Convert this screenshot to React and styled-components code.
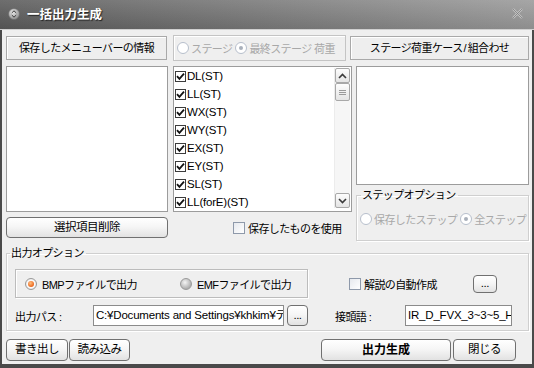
import React from 'react';
import styled, { createGlobalStyle } from 'styled-components';

const GlobalStyle = createGlobalStyle`
  html, body { margin: 0; padding: 0; background: #fff; }
  body {
    font-family: "Liberation Sans", "Noto Sans CJK JP", sans-serif;
    font-size: 11px;
    letter-spacing: -0.6px;
    color: #000;
  }
  * { box-sizing: border-box; }
`;

const Window = styled.div`
  width: 534px;
  height: 368px;
  display: flex;
  flex-direction: column;
  background: #efefef;
`;

const TitleBar = styled.div`
  height: 30px;
  flex: none;
  display: flex;
  align-items: center;
  padding: 0 10px 2px 8px;
  background:
    linear-gradient(rgba(255, 255, 255, 0.12), rgba(0, 0, 0, 0.08)),
    linear-gradient(to right, #5a5a5a, #7a7a7a 50%, #9a9a9a);
  border-bottom: 1px solid #d0d0d0;
`;

const Title = styled.span`
  margin-left: 7px;
  color: #fff;
  font-family: "Noto Sans CJK JP", sans-serif;
  font-weight: bold;
  font-size: 12.5px;
  letter-spacing: 0;
  text-shadow: 1px 1px 1px #222;
`;

const CloseBox = styled.span`
  margin-left: auto;
  display: flex;
`;

const Body = styled.div`
  flex: 1;
  display: flex;
  flex-direction: column;
  padding: 6px 3px 0 4px;
  border: solid #4a4a4a;
  border-width: 0 2px 4px 2px;
`;

const TopArea = styled.div`
  display: flex;
  align-items: flex-start;
`;

const Column = styled.div`
  display: flex;
  flex-direction: column;
  width: ${p => p.$w}px;
  margin-left: ${p => p.$ml || 0}px;
`;

const HeaderBox = styled.div`
  height: 24px;
  line-height: 22px;
  text-align: center;
  border: 1px solid #a9a9a9;
  background: #eeeeee;
  box-shadow: inset 1px 1px 0 #fff;
  margin-left: ${p => p.$ml || 0}px;
  margin-right: ${p => p.$mr || 0}px;
  white-space: nowrap;
`;

const Slash = styled.span`
  letter-spacing: 0;
  padding: 0 1px;
`;

const RadioStrip = styled.div`
  height: 26px;
  width: 173px;
  margin-top: -1px;
  display: flex;
  align-items: center;
  gap: 3px;
  padding-left: 3px;
  border: 1px solid #c4c4c4;
  box-shadow: inset 1px 1px 0 #fff;
  color: #a8a8a8;
  white-space: nowrap;
`;

const ListBox = styled.div`
  height: ${p => p.$h}px;
  margin-top: ${p => p.$mt || 0}px;
  margin-left: ${p => p.$ml || 0}px;
  background: #fff;
  border: 1px solid #9c9c9c;
  display: flex;
`;

const Items = styled.div`
  flex: 1;
  display: flex;
  flex-direction: column;
  padding-left: 1px;
`;

const Item = styled.div`
  height: 18px;
  display: flex;
  align-items: center;
  gap: 1px;
  font-size: 11.5px;
  letter-spacing: -0.2px;
  white-space: nowrap;
`;

const ScrollBar = styled.div`
  width: 16px;
  margin: 1px 1px 3px 0;
  display: flex;
  flex-direction: column;
  background: #f6f6f6;
  border-left: 1px solid #ececec;
`;

const ScrollBtn = styled.div`
  height: ${p => p.$h || 16}px;
  border: 1px solid #a8a8a8;
  border-radius: 2px;
  background: linear-gradient(#fdfdfd, #e4e4e4);
  display: flex;
  align-items: center;
  justify-content: center;
`;

const Track = styled.div`
  flex: 1;
`;

const Button = styled.button`
  width: ${p => p.$w}px;
  height: ${p => p.$h || 21}px;
  margin-top: ${p => p.$mt || 0}px;
  margin-left: ${p => p.$ml || 0}px;
  padding: 0;
  border: 1px solid #707070;
  border-radius: 4px;
  background: linear-gradient(#ffffff, #f6f6f6 45%, #e2e2e2);
  font-family: "Liberation Sans", "Noto Sans CJK JP", sans-serif;
  font-size: ${p => (p.$bold ? 12 : 11.5)}px;
  letter-spacing: ${p => (p.$bold ? 0 : -0.5)}px;
  font-weight: ${p => (p.$bold ? 'bold' : 'normal')};
  color: #000;
  line-height: 1;
  flex: none;
`;

const CheckRow = styled.label`
  display: flex;
  align-items: center;
  gap: 3px;
  margin-top: ${p => p.$mt || 0}px;
  margin-left: ${p => p.$ml || 0}px;
  white-space: nowrap;
`;

const Box = styled.span`
  width: ${p => p.$size || 11}px;
  height: ${p => p.$size || 11}px;
  flex: none;
  display: flex;
  align-items: center;
  justify-content: center;
  border: 1px solid ${p => (p.$light ? '#8e99aa' : '#3c3c3c')};
  background: ${p => (p.$light ? 'linear-gradient(135deg, #e6e9ee, #ffffff)' : '#fff')};
`;

const Radio = styled.span`
  width: 12px;
  height: 12px;
  flex: none;
  border-radius: 50%;
  display: flex;
  align-items: center;
  justify-content: center;
  border: 1px solid ${p => (p.$tone === 'disabled' ? '#b7bfcc' : '#9a9a9a')};
  background: ${p =>
    p.$tone === 'disabled'
      ? '#fff'
      : p.$tone === 'gray'
      ? 'radial-gradient(circle at 40% 35%, #f4f4f4, #b0b0b0 70%)'
      : 'radial-gradient(circle at 50% 50%, #fafafa 0 55%, #c8c8c8 100%)'};
  &::after {
    content: '';
    display: ${p => (p.$dot ? 'block' : 'none')};
    width: ${p => (p.$tone === 'orange' ? 6 : 4)}px;
    height: ${p => (p.$tone === 'orange' ? 6 : 4)}px;
    border-radius: 50%;
    background: ${p =>
      p.$tone === 'orange'
        ? 'radial-gradient(circle at 40% 35%, #ffc080, #e85a10 80%)'
        : '#a9b0bb'};
  }
`;

const Group = styled.fieldset`
  margin: ${p => p.$mt || 0}px 0 0 ${p => p.$ml || 0}px;
  padding: ${p => p.$pad};
  height: ${p => p.$h}px;
  border: 1px solid #cfcfcf;
  box-shadow: inset 1px 1px 0 #fff, 1px 1px 0 #fff;
  min-width: 0;
`;

const Legend = styled.legend`
  padding: 0 2px 0 1px;
  margin-left: ${p => p.$ml || 0}px;
  line-height: 13px;
`;

const Row = styled.div`
  display: flex;
  align-items: center;
  margin-top: ${p => p.$mt || 0}px;
  gap: ${p => p.$gap || 0}px;
`;

const RadioOpt = styled.span`
  display: flex;
  align-items: center;
  gap: ${p => p.$gap || 4}px;
  width: ${p => (p.$w ? `${p.$w}px` : 'auto')};
  color: ${p => p.$color || '#000'};
  white-space: nowrap;
`;

const InnerBox = styled.div`
  width: 293px;
  height: 29px;
  display: flex;
  align-items: center;
  padding-left: 9px;
  border: 1px solid #bcbcbc;
  box-shadow: inset 1px 1px 0 #fff, 1px 1px 0 #fff;
`;

const Label = styled.span`
  width: ${p => p.$w}px;
  margin-left: ${p => p.$ml || 0}px;
  flex: none;
  white-space: nowrap;
`;

const TextInput = styled.div`
  width: ${p => p.$w}px;
  height: 21px;
  line-height: 19px;
  padding-left: 2px;
  border: 1px solid #8b8b8b;
  background: #fff;
  font-size: 11.5px;
  letter-spacing: -0.2px;
  overflow: hidden;
  white-space: nowrap;
  flex: none;
`;

const Footer = styled.div`
  display: flex;
  align-items: center;
  margin-top: 8px;
`;

const CheckMark = () => (
  <svg width="9" height="9" viewBox="0 0 9 9">
    <path d="M1 4.2 L3.4 6.8 L8 1.6" fill="none" stroke="#111" strokeWidth="1.8" />
  </svg>
);

const Chevron = ({ up }) => (
  <svg width="9" height="6" viewBox="0 0 9 6">
    <path d={up ? 'M1 5 L4.5 1.5 L8 5' : 'M1 1 L4.5 4.5 L8 1'} fill="none" stroke="#3a3a3a" strokeWidth="1.6" />
  </svg>
);

const Grip = () => (
  <svg width="7" height="7" viewBox="0 0 7 7">
    <path d="M0 1.5 H7 M0 3.5 H7 M0 5.5 H7" stroke="#9a9a9a" strokeWidth="1" />
  </svg>
);

const CollapseIcon = () => (
  <svg width="12" height="12" viewBox="0 0 12 12">
    <defs>
      <radialGradient id="cg" cx="40%" cy="35%" r="70%">
        <stop offset="0" stopColor="#e8e8e8" />
        <stop offset="1" stopColor="#8c8c8c" />
      </radialGradient>
    </defs>
    <circle cx="6" cy="6" r="5.5" fill="url(#cg)" stroke="#6a6a6a" strokeWidth="0.6" />
    <path d="M3.8 4.9 L6 2.8 L8.2 4.9 M3.8 7.1 L6 9.2 L8.2 7.1" fill="none" stroke="#3a3a3a" strokeWidth="1" />
  </svg>
);

const CloseIcon = () => (
  <svg width="13" height="13" viewBox="0 0 13 13">
    <path d="M2 2 L11 11 M11 2 L2 11" stroke="#c4c4c4" strokeWidth="2.2" />
    <path d="M2 2 L11 11 M11 2 L2 11" stroke="#7c7c7c" strokeWidth="0.8" />
  </svg>
);

const loadCases = ['DL(ST)', 'LL(ST)', 'WX(ST)', 'WY(ST)', 'EX(ST)', 'EY(ST)', 'SL(ST)', 'LL(forE)(ST)'];

const App = () => {
  return (
    <>
      <GlobalStyle />
      <Window>
        <TitleBar>
          <CollapseIcon />
          <Title>一括出力生成</Title>
          <CloseBox>
            <CloseIcon />
          </CloseBox>
        </TitleBar>
        <Body>
          <TopArea>
            <Column $w={162}>
              <HeaderBox $mr={1}>保存したメニューバーの情報</HeaderBox>
              <ListBox $h={146} $mt={6} />
              <Button $w={162} $h={21} $mt={5}>選択項目削除</Button>
            </Column>

            <Column $w={179} $ml={5}>
              <RadioStrip>
                <RadioOpt $color="#a8a8a8" $gap={2}>
                  <Radio $tone="disabled" />
                  ステージ
                </RadioOpt>
                <RadioOpt $color="#a8a8a8" $gap={2}>
                  <Radio $tone="disabled" $dot />
                  最終ステージ 荷重
                </RadioOpt>
              </RadioStrip>
              <ListBox $h={146} $mt={5}>
                <Items>
                  {loadCases.map(name => (
                    <Item key={name}>
                      <Box>
                        <CheckMark />
                      </Box>
                      {name}
                    </Item>
                  ))}
                </Items>
                <ScrollBar>
                  <ScrollBtn $h={15}>
                    <Chevron up />
                  </ScrollBtn>
                  <ScrollBtn $h={18}>
                    <Grip />
                  </ScrollBtn>
                  <Track />
                  <ScrollBtn $h={15}>
                    <Chevron />
                  </ScrollBtn>
                </ScrollBar>
              </ListBox>
              <CheckRow $mt={8} $ml={60}>
                <Box $light $size={12} />
                保存したものを使用
              </CheckRow>
            </Column>

            <Column $w={173} $ml={4}>
              <HeaderBox $ml={-6}>
                ステージ荷重ケース<Slash>/</Slash>組合わせ
              </HeaderBox>
              <ListBox $h={119} $mt={6} />
              <Group $mt={4} $h={52} $pad="3px 2px 0 3px">
                <Legend $ml={1}>ステップオプション</Legend>
                <Row $mt={6} $gap={3}>
                  <RadioOpt $color="#a8a8a8" $gap={2}>
                    <Radio $tone="disabled" />
                    保存したステップ
                  </RadioOpt>
                  <RadioOpt $color="#a8a8a8" $gap={2}>
                    <Radio $tone="disabled" $dot />
                    全ステップ
                  </RadioOpt>
                </Row>
              </Group>
            </Column>
          </TopArea>

          <Group $mt={6} $h={84} $pad="4px 8px 0 8px">
            <Legend $ml={-5}>出力オプション</Legend>
            <Row $mt={5}>
              <InnerBox>
                <RadioOpt $w={155} $gap={5}>
                  <Radio $tone="orange" $dot />
                  BMPファイルで出力
                </RadioOpt>
                <RadioOpt $gap={5}>
                  <Radio $tone="gray" />
                  EMFファイルで出力
                </RadioOpt>
              </InnerBox>
              <CheckRow $ml={41}>
                <Box $light $size={12} />
                解説の自動作成
              </CheckRow>
              <Button $w={24} $h={18} $ml={36}>...</Button>
            </Row>
            <Row $mt={7}>
              <Label $w={78}>出力パス :</Label>
              <TextInput $w={191}>C:¥Documents and Settings¥khkim¥テ</TextInput>
              <Button $w={21} $h={21} $ml={3}>...</Button>
              <Label $w={70} $ml={27}>接頭語 :</Label>
              <TextInput $w={107}>IR_D_FVX_3~3~5_H</TextInput>
            </Row>
          </Group>

          <Footer>
            <Button $w={62} $h={22}>書き出し</Button>
            <Button $w={61} $h={22} $ml={1}>読み込み</Button>
            <Button $w={130} $h={22} $ml={191} $bold>出力生成</Button>
            <Button $w={63} $h={22} $ml={2}>閉じる</Button>
          </Footer>
        </Body>
      </Window>
    </>
  );
};

export default App;
